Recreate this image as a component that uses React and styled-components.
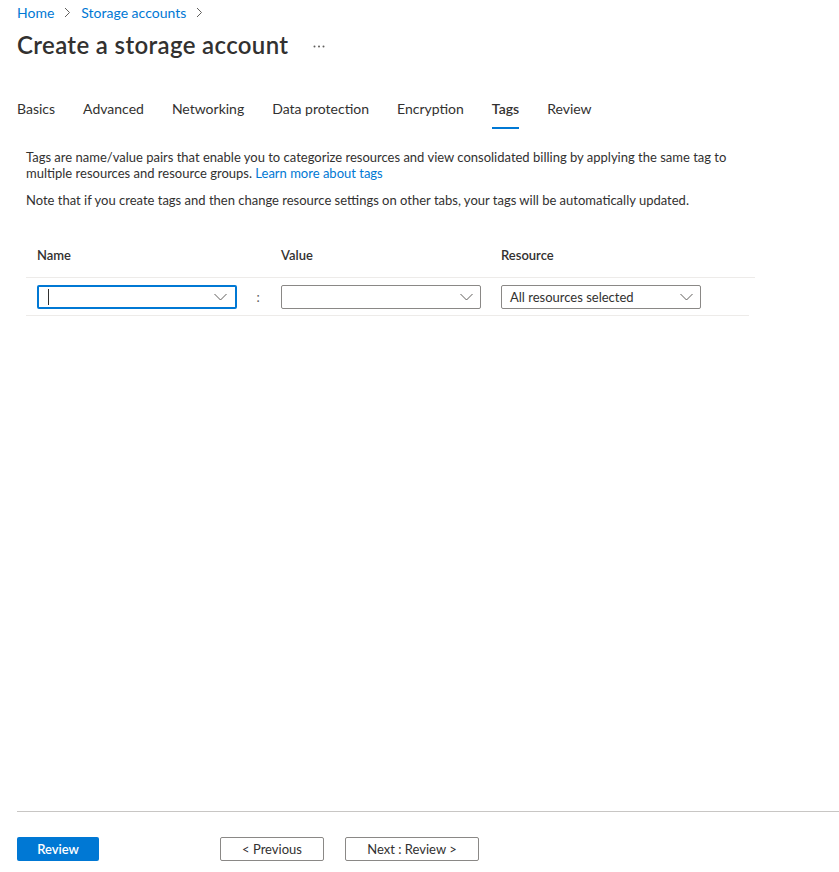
import React from "react";
import styled, { createGlobalStyle } from "styled-components";

const GlobalStyle = createGlobalStyle`
  html, body {
    margin: 0;
    padding: 0;
    background: #fff;
  }
  body {
    font-family: "Segoe UI", Lato, "Noto Sans", sans-serif;
    color: #323130;
  }
`;

const tabs = ["Basics", "Advanced", "Networking", "Data protection", "Encryption", "Tags", "Review"];

const ChevronRight = () => (
  <svg width="7" height="11" viewBox="0 0 7 11" fill="none">
    <path d="M1 1 L5.5 5.5 L1 10" stroke="#605e5c" strokeWidth="1" />
  </svg>
);

const ChevronDown = () => (
  <svg width="13" height="8" viewBox="0 0 13 8" fill="none">
    <path d="M0.5 1 L6.5 7 L12.5 1" stroke="#605e5c" strokeWidth="1" />
  </svg>
);

const Dots = () => (
  <svg width="12" height="3" viewBox="0 0 12 3">
    <circle cx="1.5" cy="1.5" r="1" fill="#605e5c" />
    <circle cx="6" cy="1.5" r="1" fill="#605e5c" />
    <circle cx="10.5" cy="1.5" r="1" fill="#605e5c" />
  </svg>
);

const App = () => {
  return (
    <>
      <GlobalStyle />
      <Page>
        <Main>
          <Breadcrumb>
            <Crumb>Home</Crumb>
            <ChevronRight />
            <Crumb>Storage accounts</Crumb>
            <ChevronRight />
          </Breadcrumb>

          <TitleRow>
            <Title>Create a storage account</Title>
            <MoreButton>
              <Dots />
            </MoreButton>
          </TitleRow>

          <Tabs>
            {tabs.map((t) => (
              <Tab key={t} $active={t === "Tags"}>
                {t}
              </Tab>
            ))}
          </Tabs>

          <Content>
            <Paragraph>
              Tags are name/value pairs that enable you to categorize resources and view consolidated billing by
              applying the same tag to multiple resources and resource groups. <Link>Learn more about tags</Link>
            </Paragraph>
            <Paragraph $gap>
              Note that if you create tags and then change resource settings on other tabs, your tags will be
              automatically updated.
            </Paragraph>

            <TagTable>
              <HeaderRow>
                <HeaderCell>Name</HeaderCell>
                <HeaderCell />
                <HeaderCell>Value</HeaderCell>
                <HeaderCell>Resource</HeaderCell>
              </HeaderRow>
              <DataRow>
                <Cell>
                  <Combo $focused>
                    <Caret />
                    <ChevronDown />
                  </Combo>
                </Cell>
                <ColonCell>:</ColonCell>
                <Cell>
                  <Combo>
                    <span />
                    <ChevronDown />
                  </Combo>
                </Cell>
                <Cell>
                  <Combo>
                    <ComboText>All resources selected</ComboText>
                    <ChevronDown />
                  </Combo>
                </Cell>
              </DataRow>
            </TagTable>
          </Content>
        </Main>

        <Footer>
          <PrimaryButton>Review</PrimaryButton>
          <NavButtons>
            <SecondaryButton $width={104}>&lt; Previous</SecondaryButton>
            <SecondaryButton $width={134}>Next : Review &gt;</SecondaryButton>
          </NavButtons>
        </Footer>
      </Page>
    </>
  );
};

const Page = styled.div`
  display: flex;
  flex-direction: column;
  min-height: 100vh;
`;

const Main = styled.div`
  flex: 1;
  padding-left: 17px;
`;

const Breadcrumb = styled.nav`
  display: flex;
  align-items: center;
  gap: 10px;
  height: 20px;
  margin-top: 2px;
  font-size: 14px;

  svg {
    margin-top: 1px;
  }
`;

const Crumb = styled.a`
  color: #0078d4;
  cursor: pointer;
`;

const TitleRow = styled.div`
  display: flex;
  align-items: center;
  height: 32px;
  margin-top: 7px;
`;

const Title = styled.h1`
  margin: 0;
  font-size: 24px;
  font-weight: 600;
  line-height: 32px;
  letter-spacing: 0.35px;
  color: #323130;
`;

const MoreButton = styled.span`
  display: inline-flex;
  margin-left: 25px;
  margin-top: 2px;
`;

const Tabs = styled.div`
  display: flex;
  margin-top: 32px;
  height: 36px;
`;

const Tab = styled.div`
  position: relative;
  margin-right: 28px;
  font-size: 14px;
  line-height: 32px;
  height: 36px;
  font-weight: ${({ $active }) => ($active ? 600 : 400)};
  color: #323130;

  &::after {
    content: "";
    position: absolute;
    left: 0;
    right: 0;
    bottom: 0;
    height: 2px;
    background: ${({ $active }) => ($active ? "#0078d4" : "transparent")};
  }
`;

const Content = styled.div`
  padding-left: 9px;
  padding-top: 20px;
  max-width: 738px;
`;

const Paragraph = styled.p`
  margin: ${({ $gap }) => ($gap ? "11px 0 0" : "0")};
  font-size: 13px;
  line-height: 16px;
  color: #323130;
`;

const Link = styled.a`
  color: #0078d4;
  cursor: pointer;
`;

const TagTable = styled.div`
  margin-top: 31px;
  width: 729px;
`;

const rowColumns = "218px 26px 220px 1fr";

const HeaderRow = styled.div`
  display: grid;
  grid-template-columns: ${rowColumns};
  align-items: center;
  height: 32px;
  border-bottom: 1px solid #edebe9;
  padding-bottom: 6px;
`;

const HeaderCell = styled.div`
  padding-left: 11px;
  font-size: 13px;
  font-weight: 600;
  color: #323130;
`;

const DataRow = styled.div`
  display: grid;
  grid-template-columns: ${rowColumns};
  align-items: center;
  height: 37px;
  width: 723px;
  border-bottom: 1px solid #edebe9;
`;

const Cell = styled.div`
  padding-left: 11px;
`;

const ColonCell = styled.div`
  text-align: center;
  font-size: 13px;
  color: #605e5c;
  padding-left: 2px;
`;

const Combo = styled.div`
  box-sizing: border-box;
  display: flex;
  align-items: center;
  justify-content: space-between;
  width: 200px;
  height: 24px;
  padding: 0 ${({ $focused }) => ($focused ? "8px 0 7px" : "7px 0 8px")};
  border: ${({ $focused }) => ($focused ? "2px solid #0078d4" : "1px solid #8a8886")};
  border-radius: 2px;
  background: #fff;
`;

const Caret = styled.span`
  display: inline-block;
  width: 1px;
  height: 16px;
  margin-left: 2px;
  background: #323130;
`;

const ComboText = styled.span`
  font-size: 13px;
  color: #323130;
`;

const Footer = styled.footer`
  display: flex;
  align-items: center;
  margin-left: 17px;
  padding: 25px 0 11px;
  border-top: 1px solid #c8c6c4;
`;

const PrimaryButton = styled.button`
  box-sizing: border-box;
  width: 82px;
  height: 24px;
  border: none;
  border-radius: 2px;
  background: #0078d4;
  color: #fff;
  font-family: inherit;
  font-size: 13px;
  font-weight: 600;
  cursor: pointer;
`;

const NavButtons = styled.div`
  display: flex;
  gap: 21px;
  margin-left: 121px;
`;

const SecondaryButton = styled.button`
  box-sizing: border-box;
  width: ${({ $width }) => $width}px;
  height: 24px;
  border: 1px solid #8a8886;
  border-radius: 2px;
  background: #fff;
  color: #323130;
  font-family: inherit;
  font-size: 13px;
  cursor: pointer;
`;

export default App;
